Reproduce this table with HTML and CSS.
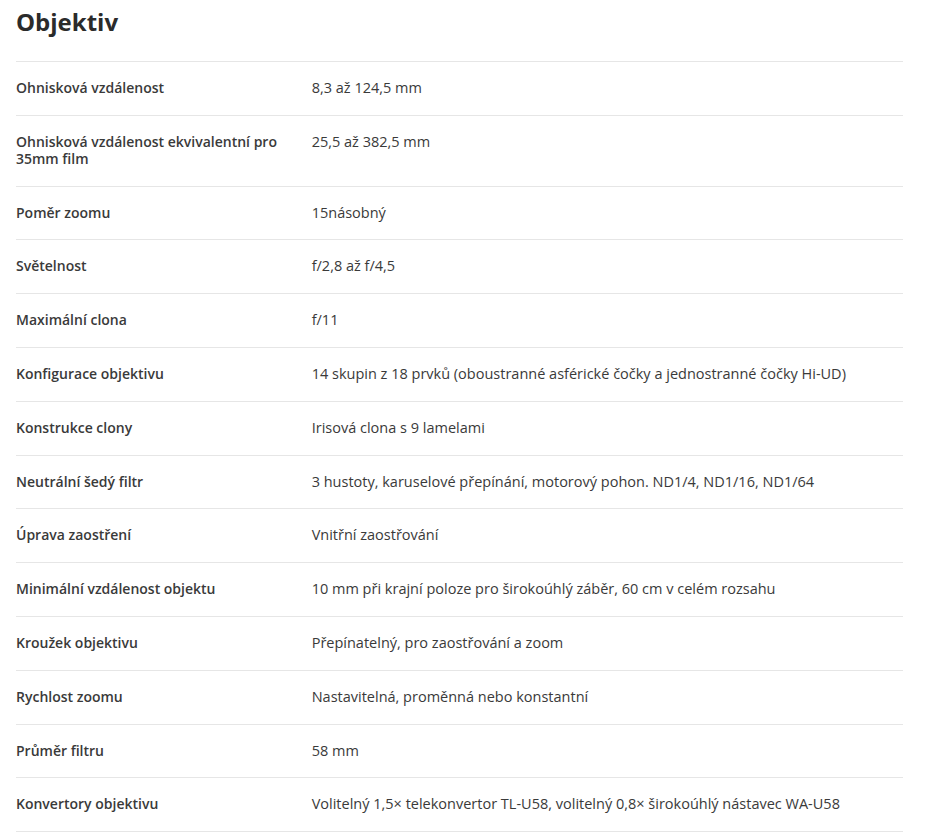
FILE: index.html
```html
<!DOCTYPE html>
<html lang="cs">
<head>
<meta charset="utf-8">
<title>Objektiv</title>
<link rel="stylesheet" href="styles.css">
</head>
<body>
<section class="specs">
  <h2 class="specs-title">Objektiv</h2>
  <dl class="spec-list">
    <div class="spec-row"><dt>Ohnisková vzdálenost</dt><dd>8,3 až 124,5 mm</dd></div>
    <div class="spec-row"><dt>Ohnisková vzdálenost ekvivalentní pro 35mm film</dt><dd>25,5 až 382,5 mm</dd></div>
    <div class="spec-row"><dt>Poměr zoomu</dt><dd>15násobný</dd></div>
    <div class="spec-row"><dt>Světelnost</dt><dd>f/2,8 až f/4,5</dd></div>
    <div class="spec-row"><dt>Maximální clona</dt><dd>f/11</dd></div>
    <div class="spec-row"><dt>Konfigurace objektivu</dt><dd>14 skupin z 18 prvků (oboustranné asférické čočky a jednostranné čočky Hi-UD)</dd></div>
    <div class="spec-row"><dt>Konstrukce clony</dt><dd>Irisová clona s 9 lamelami</dd></div>
    <div class="spec-row"><dt>Neutrální šedý filtr</dt><dd>3 hustoty, karuselové přepínání, motorový pohon. ND1/4, ND1/16, ND1/64</dd></div>
    <div class="spec-row"><dt>Úprava zaostření</dt><dd>Vnitřní zaostřování</dd></div>
    <div class="spec-row"><dt>Minimální vzdálenost objektu</dt><dd>10 mm při krajní poloze pro širokoúhlý záběr, 60 cm v celém rozsahu</dd></div>
    <div class="spec-row"><dt>Kroužek objektivu</dt><dd>Přepínatelný, pro zaostřování a zoom</dd></div>
    <div class="spec-row"><dt>Rychlost zoomu</dt><dd>Nastavitelná, proměnná nebo konstantní</dd></div>
    <div class="spec-row"><dt>Průměr filtru</dt><dd>58 mm</dd></div>
    <div class="spec-row"><dt>Konvertory objektivu</dt><dd>Volitelný 1,5× telekonvertor TL-U58, volitelný 0,8× širokoúhlý nástavec WA-U58</dd></div>
  </dl>
</section>
</body>
</html>
```

FILE: styles.css
```css
html, body {
  margin: 0;
  padding: 0;
  background: #ffffff;
}

body {
  font-family: "Open Sans", "Liberation Sans", sans-serif;
  color: #333333;
}

.specs {
  width: 887px;
  margin-left: 16px;
}

.specs-title {
  margin: 0;
  padding-top: 6px;
  height: 61px;
  box-sizing: border-box;
  font-size: 24px;
  line-height: 32px;
  font-weight: 700;
  color: #2b2b2b;
}

.spec-list {
  margin: 0;
  border-bottom: 1px solid #e6e6e6;
}

.spec-row {
  display: grid;
  grid-template-columns: 1fr 2fr;
  border-top: 1px solid #e6e6e6;
  padding: 17px 0 18.8px;
  font-size: 14.5px;
  line-height: 17px;
}

.spec-row dt {
  margin: 0;
  padding-right: 16px;
  font-size: 14px;
  font-weight: 600;
  color: #3a3a3a;
}

.spec-row dd {
  margin: 0;
  font-weight: 400;
  color: #3a3a3a;
}
```
